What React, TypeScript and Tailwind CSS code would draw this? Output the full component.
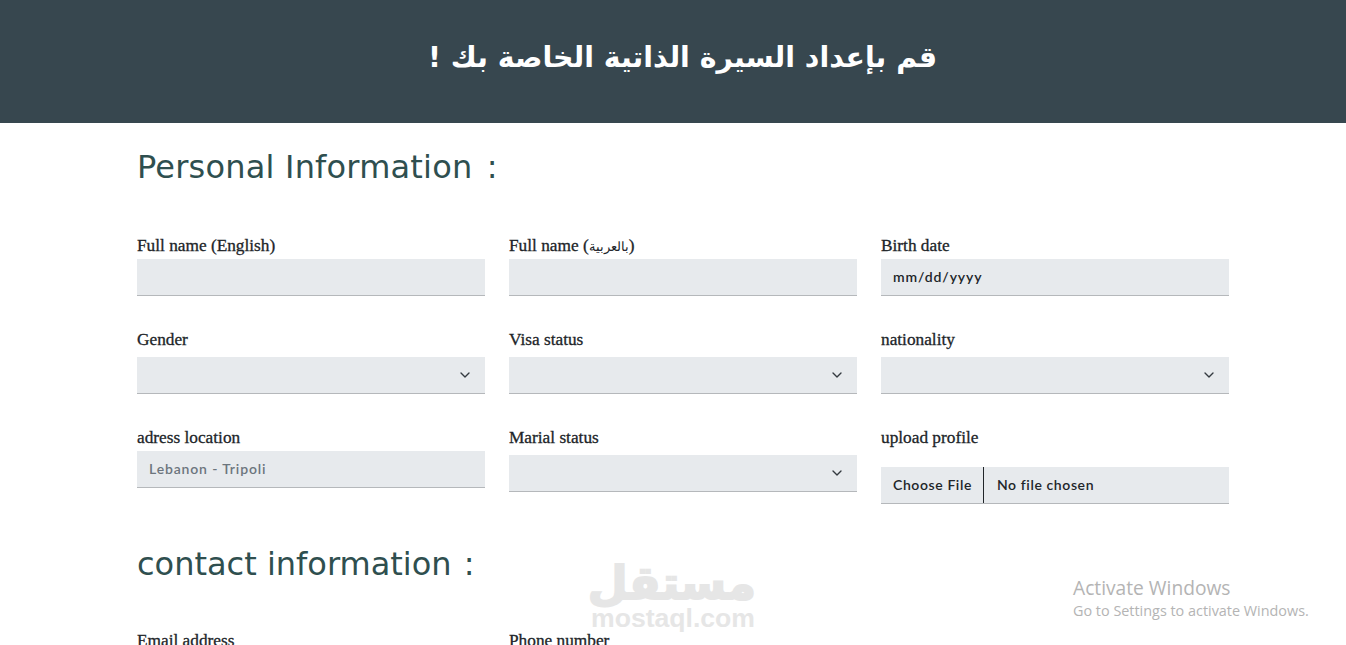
import { ChevronDown } from 'lucide-react';
import type { ReactNode } from 'react';

const labelClass =
  "block h-6 text-[17.3px] leading-[26px] text-[#212529] [-webkit-text-stroke:0.3px_#212529] font-['Liberation_Serif',serif]";
const fieldClass =
  "block w-full h-[37px] bg-[#e7eaed] border-0 border-b border-[#b5b8bb] px-3 pb-0.5 text-[14px] font-semibold tracking-[0.6px] font-['Lato',sans-serif] outline-none";
const headingClass = "h-12 text-[32px] text-[#2f4f4f] font-['DejaVu_Sans',sans-serif]";

function TextField({ label, value, valueClass }: { label: ReactNode; value?: string; valueClass?: string }) {
  return (
    <div>
      <label className={labelClass}>{label}</label>
      <input
        readOnly
        value={value ?? ''}
        className={`${fieldClass} mt-0.5 ${valueClass ?? 'text-[#212529]'}`}
      />
    </div>
  );
}

function SelectField({ label }: { label: string }) {
  return (
    <div>
      <label className={labelClass}>{label}</label>
      <div className="relative mt-1.5">
        <select className={`${fieldClass} appearance-none`} />
        <ChevronDown className="absolute right-3 top-[10px] w-4 h-4 text-[#343a40] pointer-events-none" strokeWidth={2} />
      </div>
    </div>
  );
}

export default function App() {
  return (
    <div className="relative h-[645px] overflow-hidden bg-white">
      <header className="h-[123px] bg-[#37474f] flex items-center justify-center pb-[7px] pl-[19px]">
        <h1 dir="rtl" className="text-white text-[28.4px] font-bold font-['DejaVu_Sans',sans-serif]">
          قم بإعداد السيرة الذاتية الخاصة بك !
        </h1>
      </header>

      <main className="ml-[137px] w-[1092px]">
        <h2 className={`${headingClass} leading-[50px] mt-[19px] mb-[43px] tracking-[0.2px]`}>
          Personal Information <span className="ml-1">:</span>
        </h2>

        <div className="grid grid-cols-3 gap-x-6 gap-y-[31px]">
          <TextField label="Full name (English)" />
          <TextField
            label={
              <>
                Full name (<span className="text-[13px] [-webkit-text-stroke:0px]">بالعربية</span>)
              </>
            }
          />
          <TextField label="Birth date" value="mm/dd/yyyy" valueClass="text-[#212529] tracking-[0.9px]" />

          <SelectField label="Gender" />
          <SelectField label="Visa status" />
          <SelectField label="nationality" />

          <TextField label="adress location" value="Lebanon - Tripoli" valueClass="text-[#6c757d] font-bold tracking-[0.85px]" />
          <SelectField label="Marial status" />
          <div>
            <label className={labelClass}>upload profile</label>
            <div className={`${fieldClass} mt-[18px] !px-0 !pb-0 text-[#212529] flex items-center`}>
              <span className="h-full flex items-center pl-3 pr-[11px] pb-0.5 border-r border-[#212529]">Choose File</span>
              <span className="ml-[13px] pb-0.5">No file chosen</span>
            </div>
          </div>
        </div>

        <h2 className={`${headingClass} leading-[48px] mt-9 mb-10`}>
          contact information <span className="ml-0.5">:</span>
        </h2>

        <div className="grid grid-cols-3 gap-x-6">
          <TextField label="Email address" />
          <TextField label="Phone number" />
        </div>
      </main>

      {/* mostaql watermark */}
      <div className="absolute left-[590px] top-[560px] w-[166px] text-center text-[#e6e6e6] pointer-events-none">
        <div
          dir="rtl"
          className="text-[46px] leading-[46px] font-bold [-webkit-text-stroke:2px_#e6e6e6] font-['DejaVu_Sans',sans-serif]"
        >
          مستقل
        </div>
        <div className="text-[26.6px] leading-[24px] font-bold font-['Liberation_Sans',sans-serif]">mostaql.com</div>
      </div>

      {/* windows activation notice */}
      <div className="absolute left-[1073px] top-[574px] text-[#b4b4b4] font-['Open_Sans',sans-serif] pointer-events-none">
        <div className="text-[19.2px] leading-[27px]">Activate Windows</div>
        <div className="text-[14.4px] leading-[20px]">Go to Settings to activate Windows.</div>
      </div>
    </div>
  );
}
